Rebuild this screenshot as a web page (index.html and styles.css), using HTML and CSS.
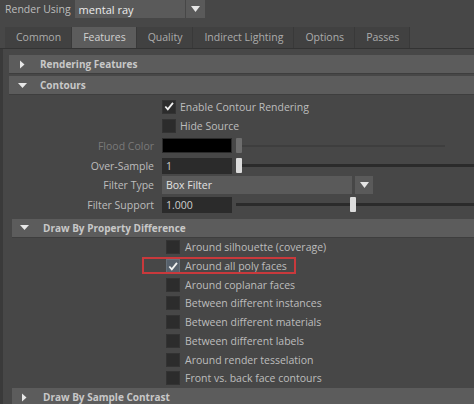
FILE: index.html
```html
<!DOCTYPE html>
<html>
<head>
<meta charset="utf-8">
<link rel="stylesheet" href="styles.css">
</head>
<body>
<div class="app">
  <div class="topbar">
    <span class="top-label">Render Using</span>
    <div class="combo">
      <span class="combo-text">mental ray</span>
    </div>
    <div class="combo-btn"><svg width="9" height="6" viewBox="0 0 9 6"><path d="M0 0H9L4.5 6Z" fill="#e6e6e6"/></svg></div>
  </div>

  <div class="tabs">
    <div class="tab">Common</div>
    <div class="tab active">Features</div>
    <div class="tab">Quality</div>
    <div class="tab">Indirect Lighting</div>
    <div class="tab">Options</div>
    <div class="tab">Passes</div>
  </div>

  <div class="panel">
    <div class="sec-head">
      <svg class="tri" width="9" height="9" viewBox="0 0 9 9"><path d="M2 0.5L6.5 4.5L2 8.5Z" fill="#e8e8e8"/></svg>
      <span>Rendering Features</span>
    </div>
    <div class="sec-head">
      <svg class="tri" width="9" height="9" viewBox="0 0 9 9"><path d="M0 2H9L4.5 7Z" fill="#e8e8e8"/></svg>
      <span>Contours</span>
    </div>

    <div class="form">
      <div class="row">
        <div class="label"></div>
        <div class="cb checked"><svg width="13" height="13" viewBox="0 0 13 13"><path d="M2.5 6.5L5.2 9.5L10.8 2.5" stroke="#f0f0f0" stroke-width="2" fill="none"/></svg></div>
        <span class="cb-text">Enable Contour Rendering</span>
      </div>
      <div class="row">
        <div class="label"></div>
        <div class="cb"></div>
        <span class="cb-text">Hide Source</span>
      </div>
      <div class="row">
        <div class="label dim">Flood Color</div>
        <div class="swatch"></div>
        <div class="slider dimmed short">
          <div class="handle"></div>
          <div class="track"></div>
        </div>
      </div>
      <div class="row">
        <div class="label">Over-Sample</div>
        <div class="field">1</div>
        <div class="slider">
          <div class="handle"></div>
          <div class="track"></div>
        </div>
      </div>
      <div class="row">
        <div class="label">Filter Type</div>
        <div class="dropdown">Box Filter</div>
        <div class="dd-btn"><svg width="9" height="6" viewBox="0 0 9 6"><path d="M0 0H9L4.5 6Z" fill="#e6e6e6"/></svg></div>
      </div>
      <div class="row">
        <div class="label">Filter Support</div>
        <div class="field">1.000</div>
        <div class="slider">
          <div class="track pre"></div>
          <div class="handle"></div>
          <div class="track"></div>
        </div>
      </div>
    </div>

    <div class="sec-head nested">
      <svg class="tri" width="9" height="9" viewBox="0 0 9 9"><path d="M0 2H9L4.5 7Z" fill="#e8e8e8"/></svg>
      <span>Draw By Property Difference</span>
    </div>

    <div class="checks">
      <div class="crow"><div class="cb"></div><span class="cb-text">Around silhouette (coverage)</span></div>
      <div class="crow marked"><div class="cb checked hl"><svg width="13" height="13" viewBox="0 0 13 13"><path d="M2.5 6.5L5.2 9.5L10.8 2.5" stroke="#f0f0f0" stroke-width="2" fill="none"/></svg></div><span class="cb-text">Around all poly faces</span><div class="redbox"></div></div>
      <div class="crow"><div class="cb"></div><span class="cb-text">Around coplanar faces</span></div>
      <div class="crow"><div class="cb"></div><span class="cb-text">Between different instances</span></div>
      <div class="crow"><div class="cb"></div><span class="cb-text">Between different materials</span></div>
      <div class="crow"><div class="cb"></div><span class="cb-text">Between different labels</span></div>
      <div class="crow"><div class="cb"></div><span class="cb-text">Around render tesselation</span></div>
      <div class="crow"><div class="cb"></div><span class="cb-text">Front vs. back face contours</span></div>
    </div>

    <div class="sec-head nested">
      <svg class="tri" width="9" height="9" viewBox="0 0 9 9"><path d="M2 0.5L6.5 4.5L2 8.5Z" fill="#e8e8e8"/></svg>
      <span>Draw By Sample Contrast</span>
    </div>
  </div>
</div>
</body>
</html>
```

FILE: styles.css
```css
* { box-sizing: border-box; }
html, body {
  margin: 0;
  padding: 0;
  background: #474747;
}
body {
  width: 474px;
  height: 404px;
  overflow: hidden;
  font-family: "Open Sans", "DejaVu Sans", sans-serif;
  font-size: 10.5px;
  color: #bdbdbd;
}
.app {
  width: 474px;
  height: 404px;
  display: flex;
  flex-direction: column;
  overflow: hidden;
}

/* top bar */
.topbar {
  display: flex;
  align-items: flex-start;
  height: 27px;
  flex: none;
  padding-left: 5px;
}
.top-label {
  line-height: 19px;
  color: #bdbdbd;
}
.combo {
  margin-left: 4px;
  width: 110px;
  height: 18px;
  background: #5a5a5a;
  display: flex;
  align-items: center;
  padding-left: 4px;
}
.combo-text {
  color: #ececec;
  font-size: 11px;
}
.combo-btn {
  margin-left: 1px;
  width: 19px;
  height: 18px;
  background: #5a5a5a;
  display: flex;
  align-items: center;
  justify-content: center;
}

/* tabs */
.tabs {
  display: flex;
  height: 22px;
  flex: none;
  padding-left: 5px;
  border-bottom: 1px solid #333333;
}
.tab {
  height: 21px;
  line-height: 21px;
  padding: 0 10px 0 11px;
  background: #414141;
  border-right: 1px solid #393939;
  color: #acacac;
}
.tab.active {
  background: #5c5c5c;
  color: #d2d2d2;
}

/* panel */
.panel {
  flex: 1;
  min-height: 0;
  display: flex;
  flex-direction: column;
  padding-top: 6px;
  border-left: 3px solid #3a3a3a;
  background: #474747;
}
.sec-head {
  display: flex;
  align-items: center;
  height: 19px;
  flex: none;
  margin-left: 6px;
  margin-bottom: 2px;
  background: #5c5c5c;
  font-weight: bold;
  font-size: 10px;
  color: #c8c8c8;
  border-bottom: 1px solid #3e3e3e;
}
.sec-head .tri {
  margin-left: 9px;
  margin-right: 13px;
  flex: none;
}
.sec-head.nested {
  margin-left: 9px;
  margin-bottom: 0;
}
.sec-head.nested .tri {
  margin-left: 8px;
  margin-right: 14px;
}

/* form */
.form {
  display: flex;
  flex-direction: column;
  flex: none;
  margin-bottom: 4px;
}
.row {
  display: flex;
  align-items: center;
  height: 19.6px;
  flex: none;
}
.label {
  width: 151px;
  flex: none;
  text-align: right;
  margin-right: 8px;
  color: #bdbdbd;
}
.label.dim { color: #7a7a7a; }

.cb {
  width: 14px;
  height: 14px;
  flex: none;
  background: #2c2c2c;
  border: 1px solid #333;
  display: flex;
  align-items: center;
  justify-content: center;
}
.cb.hl {
  background: #56606b;
  border-color: #66707a;
}
.cb-text {
  margin-left: 4px;
  color: #bdbdbd;
  white-space: nowrap;
}

.swatch {
  width: 70px;
  height: 15px;
  flex: none;
  background: #000;
  border: 1px solid #2a2a2a;
}
.field {
  width: 70px;
  height: 16px;
  flex: none;
  background: #2b2b2b;
  color: #cfcfcf;
  line-height: 16px;
  padding-left: 4px;
}
.dropdown {
  width: 190px;
  height: 18px;
  flex: none;
  background: #5a5a5a;
  color: #e2e2e2;
  line-height: 18px;
  padding-left: 4px;
}
.dd-btn {
  margin-left: 3px;
  width: 18px;
  height: 18px;
  background: #5a5a5a;
  display: flex;
  align-items: center;
  justify-content: center;
}

.slider {
  flex: 1;
  display: flex;
  align-items: center;
  margin-left: 4px;
  height: 16px;
}
.slider.short { margin-right: 29px; }
.handle {
  width: 6px;
  height: 15px;
  flex: none;
  background: #dcdcdc;
  border-radius: 1px;
}
.track {
  flex: 1;
  height: 3px;
  background: #2b2b2b;
}
.track.pre {
  flex: none;
  width: 114px;
}
.slider.dimmed .handle { background: #6d6d6d; }
.slider.dimmed .track { background: #3e3e3e; height: 2px; }

/* checks */
.checks {
  display: flex;
  flex-direction: column;
  flex: none;
  padding-top: 0.5px;
  margin-bottom: 0.5px;
}
.crow {
  position: relative;
  display: flex;
  align-items: center;
  height: 18.7px;
  flex: none;
  padding-left: 163px;
}
.crow .cb-text { margin-left: 5px; }
.redbox {
  position: absolute;
  left: 139px;
  top: 0;
  width: 154px;
  height: 17px;
  border: 2px solid #c9393c;
}
```
